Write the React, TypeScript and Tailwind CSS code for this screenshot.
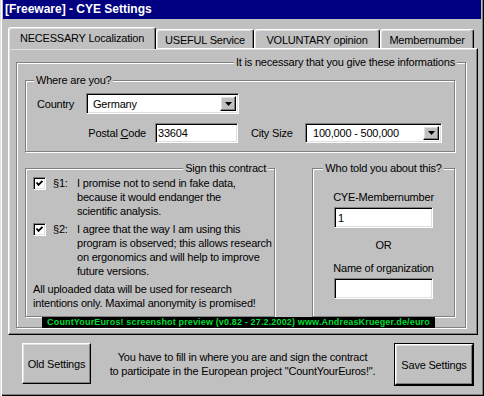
import React from "react";

const raised =
  "border border-t-white border-l-white border-r-black border-b-black shadow-[inset_-1px_-1px_0_#808080,inset_1px_1px_0_#dfdfdf]";
const sunken =
  "border border-t-[#808080] border-l-[#808080] border-r-white border-b-white shadow-[inset_1px_1px_0_#000,inset_-1px_-1px_0_#dfdfdf] bg-white";
const etched =
  "border border-[#808080] shadow-[inset_1px_1px_0_#fff,1px_1px_0_#fff]";

type TabProps = { label: string; w: string; active?: boolean };

function Tab({ label, w, active }: TabProps) {
  return active ? (
    <div
      className={`${w} relative z-10 h-[22px] -mb-px flex items-start justify-center pt-[3px] bg-[#c0c0c0] rounded-t-[3px] border-t border-l border-r border-t-white border-l-white border-r-black shadow-[inset_-1px_0_0_#808080,inset_1px_1px_0_#dfdfdf]`}
    >
      {label}
    </div>
  ) : (
    <div
      className={`${w} h-[19px] flex items-start justify-center pt-[3px] rounded-t-[3px] border-t border-l border-r border-t-white border-l-white border-r-black shadow-[inset_-1px_0_0_#808080,inset_1px_1px_0_#dfdfdf]`}
    >
      {label}
    </div>
  );
}

function Arrow() {
  return (
    <svg width="7" height="4" viewBox="0 0 7 4">
      <polygon points="0,0 7,0 3.5,4" fill="#000" />
    </svg>
  );
}

function Combo({ value, w, pl }: { value: string; w: string; pl: string }) {
  return (
    <div className={`${sunken} ${w} h-[20px] flex items-center p-[2px]`}>
      <span className={`flex-1 ${pl} whitespace-nowrap`}>{value}</span>
      <div className={`${raised} bg-[#c0c0c0] w-[16px] h-full flex items-center justify-center`}>
        <Arrow />
      </div>
    </div>
  );
}

function Check() {
  return (
    <div className={`${sunken} w-[13px] h-[13px] shrink-0 flex items-center justify-center`}>
      <svg width="9" height="9" viewBox="0 0 9 9">
        <polyline points="1.5,3.5 3.5,5.8 7.5,1.8" fill="none" stroke="#000" strokeWidth="1.9" />
      </svg>
    </div>
  );
}

export default function App() {
  return (
    <div className="relative w-[484px] h-[396px] overflow-hidden bg-[#c0c0c0] px-[3px] text-[11px] leading-[14px] tracking-[-0.2px] text-black font-['Liberation_Sans',Arial,sans-serif] shadow-[inset_1px_0_0_#dfdfdf,inset_2px_0_0_#fff,inset_-1px_-1px_0_#000,inset_-2px_-2px_0_#808080]">
      {/* title bar */}
      <div className="h-[19px] bg-[#000080] text-white font-bold text-[12px] leading-[19px] tracking-normal pl-[2px]">
        [Freeware] - CYE Settings
      </div>

      {/* tabs */}
      <div className="mt-[8px] h-[21px] pl-[5px] flex items-end">
        <Tab label="NECESSARY Localization" w="w-[148px]" active />
        <Tab label="USEFUL Service" w="w-[98px]" />
        <Tab label="VOLUNTARY opinion" w="w-[126px]" />
        <Tab label="Membernumber" w="w-[94px]" />
      </div>

      {/* tab panel */}
      <div className="ml-[5px] w-[470px] h-[287px] border border-t-white border-l-white border-r-black border-b-black shadow-[inset_-1px_-1px_0_#808080,inset_1px_1px_0_#dfdfdf] pl-[7px] pt-[7px]">
        <fieldset className={`${etched} w-[450px] h-[272px]`}>
          <legend className="ml-auto mr-[8px] px-[2px] leading-[13px] bg-[#c0c0c0]">
            It is necessary that you give these informations
          </legend>
          <div className="pl-[8px]">
            {/* where are you */}
            <fieldset className={`${etched} mt-[5px] w-[430px] h-[78px]`}>
              <legend className="ml-[8px] px-[2px] leading-[13px] bg-[#c0c0c0]">Where are you?</legend>
              <div className="mt-[6px] flex items-center">
                <span className="w-[60px] pl-[11px]">Country</span>
                <Combo value="Germany" w="w-[153px] h-[21px]" pl="pl-[4px]" />
              </div>
              <div className="mt-[9px] flex items-center">
                <span className="w-[120px] text-right">
                  Postal <span className="underline">C</span>ode
                </span>
                <div className={`${sunken} ml-[9px] w-[83px] h-[20px] pl-[2px] flex items-center`}>33604</div>
                <span className="w-[67px] pl-[13px]">City Size</span>
                <Combo value="100,000 - 500,000" w="w-[137px]" pl="pl-[5px]" />
              </div>
            </fieldset>

            <div className="mt-[10px] flex gap-[37px]">
              {/* contract */}
              <fieldset className={`${etched} w-[250px] h-[155px]`}>
                <legend className="ml-auto mr-[6px] px-[2px] leading-[13px] bg-[#c0c0c0]">Sign this contract</legend>
                <div className="mt-[1px] pl-[7px] flex flex-col gap-[4px]">
                  <div className="flex items-start">
                    <div className="mt-[1px]">
                      <Check />
                    </div>
                    <span className="ml-[7px] w-[24px]">§1:</span>
                    <span className="whitespace-nowrap">
                      I promise not to send in fake data,
                      <br />
                      because it would endanger the
                      <br />
                      scientific analysis.
                    </span>
                  </div>
                  <div className="flex items-start">
                    <div className="mt-[1px]">
                      <Check />
                    </div>
                    <span className="ml-[7px] w-[24px]">§2:</span>
                    <span className="whitespace-nowrap">
                      I agree that the way I am using this
                      <br />
                      program is observed; this allows research
                      <br />
                      on ergonomics and will help to improve
                      <br />
                      future versions.
                    </span>
                  </div>
                  <p className="whitespace-nowrap">
                    All uploaded data will be used for research
                    <br />
                    intentions only. Maximal anonymity is promised!
                  </p>
                </div>
              </fieldset>

              {/* who told you */}
              <fieldset className={`${etched} w-[143px] h-[155px]`}>
                <legend className="mx-auto px-[2px] leading-[13px] bg-[#c0c0c0]">Who told you about this?</legend>
                <div className="flex flex-col items-center">
                  <span className="mt-[15px]">CYE-Membernumber</span>
                  <div className={`${sunken} mt-[3px] w-[99px] h-[21px] pl-[3px] flex items-center`}>1</div>
                  <span className="mt-[10px]">OR</span>
                  <span className="mt-[9px]">Name of organization</span>
                  <div className={`${sunken} mt-[3px] w-[99px] h-[21px]`} />
                </div>
              </fieldset>
            </div>
          </div>
        </fieldset>
      </div>

      {/* bottom */}
      <div className="mt-[8px] pl-[19px] pr-[7px] flex items-start">
        <button className={`${raised} bg-[#c0c0c0] w-[69px] h-[41px] tracking-[-0.2px]`}>Old Settings</button>
        <p className="flex-1 mt-[7px] text-center">
          You have to fill in where you are and sign the contract
          <br />
          to participate in the European project "CountYourEuros!".
        </p>
        <div className="w-[80px] h-[43px] border border-black">
          <button className={`${raised} bg-[#c0c0c0] w-full h-full tracking-[-0.2px]`}>Save Settings</button>
        </div>
      </div>

      {/* screenshot watermark */}
      <div className="absolute left-[42px] top-[317px] w-[393px] h-[11px] bg-black text-[#00dd33] font-bold text-[9px] leading-[11px] tracking-[0.15px] text-center whitespace-nowrap">
        CountYourEuros! screenshot preview (v0.82 - 27.2.2002) www.AndreasKrueger.de/euro
      </div>
    </div>
  );
}
